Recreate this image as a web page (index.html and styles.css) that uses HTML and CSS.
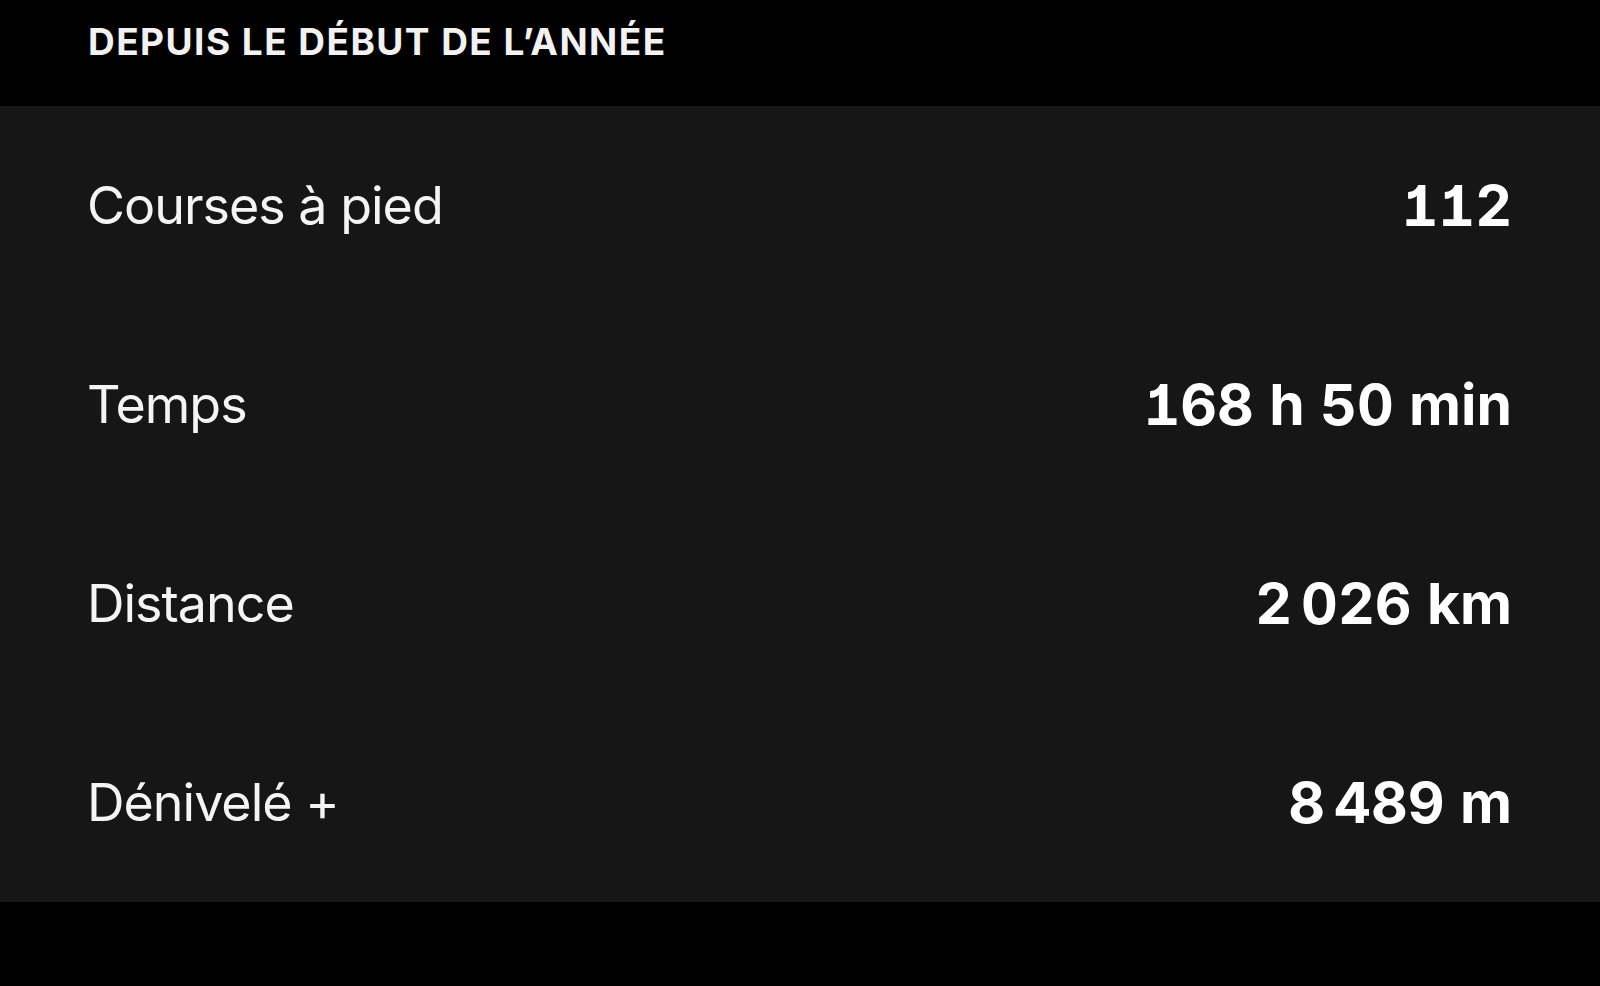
FILE: index.html
```html
<!DOCTYPE html>
<html lang="fr">
<head>
<meta charset="utf-8">
<link rel="stylesheet" href="styles.css">
</head>
<body>
<div class="page">
  <header class="section-head">
    <h2 class="section-title">DEPUIS LE DÉBUT DE L’ANNÉE</h2>
  </header>
  <section class="stats">
    <div class="stat-row"><span class="stat-label">Courses à pied</span><span class="stat-value">112</span></div>
    <div class="stat-row"><span class="stat-label">Temps</span><span class="stat-value">168 h 50 min</span></div>
    <div class="stat-row"><span class="stat-label">Distance</span><span class="stat-value">2&#8239;026 km</span></div>
    <div class="stat-row"><span class="stat-label">Dénivelé +</span><span class="stat-value">8&#8239;489 m</span></div>
  </section>
</div>
</body>
</html>
```

FILE: styles.css
```css
html, body {
  margin: 0;
  padding: 0;
  background: #000;
}
body {
  font-family: Inter, "Liberation Sans", sans-serif;
  color: #fff;
}
.page {
  width: 1600px;
  height: 986px;
  display: flex;
  flex-direction: column;
  background: #000;
}
.section-head {
  height: 106px;
  display: flex;
  align-items: center;
  padding: 0 88px 24px 88px;
  box-sizing: border-box;
}
.section-title {
  margin: 0;
  font-size: 37px;
  font-weight: 700;
  letter-spacing: 1.45px;
  color: #f2f2f2;
}
.stats {
  background: #161616;
  display: flex;
  flex-direction: column;
}
.stat-row {
  height: 199px;
  display: flex;
  align-items: center;
  justify-content: space-between;
  padding: 0 88px 0 87px;
}
.stat-label {
  font-size: 52px;
  font-weight: 400;
  letter-spacing: -1px;
  color: #f4f4f4;
}
.stat-value {
  font-size: 57px;
  font-weight: 700;
  font-feature-settings: "tnum" 1, "cv01" 1;
  color: #fff;
}
```
